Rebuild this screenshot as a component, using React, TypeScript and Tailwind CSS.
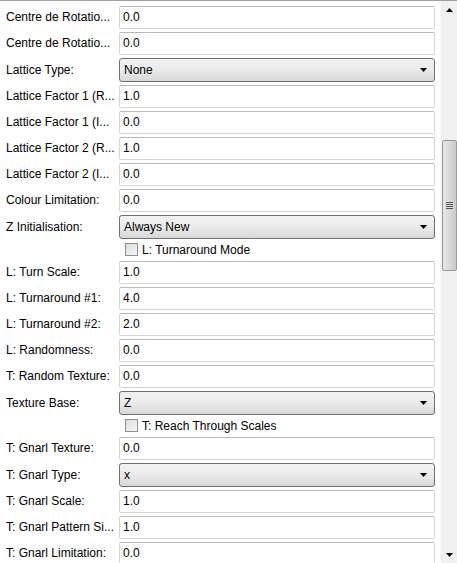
import React from "react";

type Row =
  | { kind: "text"; label: string; value: string }
  | { kind: "select"; label: string; value: string }
  | { kind: "check"; label: string };

const rows: Row[] = [
  { kind: "text", label: "Centre de Rotatio...", value: "0.0" },
  { kind: "text", label: "Centre de Rotatio...", value: "0.0" },
  { kind: "select", label: "Lattice Type:", value: "None" },
  { kind: "text", label: "Lattice Factor 1 (R...", value: "1.0" },
  { kind: "text", label: "Lattice Factor 1 (I...", value: "0.0" },
  { kind: "text", label: "Lattice Factor 2 (R...", value: "1.0" },
  { kind: "text", label: "Lattice Factor 2 (I...", value: "0.0" },
  { kind: "text", label: "Colour Limitation:", value: "0.0" },
  { kind: "select", label: "Z Initialisation:", value: "Always New" },
  { kind: "check", label: "L: Turnaround Mode" },
  { kind: "text", label: "L: Turn Scale:", value: "1.0" },
  { kind: "text", label: "L: Turnaround #1:", value: "4.0" },
  { kind: "text", label: "L: Turnaround #2:", value: "2.0" },
  { kind: "text", label: "L: Randomness:", value: "0.0" },
  { kind: "text", label: "T: Random Texture:", value: "0.0" },
  { kind: "select", label: "Texture Base:", value: "Z" },
  { kind: "check", label: "T: Reach Through Scales" },
  { kind: "text", label: "T: Gnarl Texture:", value: "0.0" },
  { kind: "select", label: "T: Gnarl Type:", value: "x" },
  { kind: "text", label: "T: Gnarl Scale:", value: "1.0" },
  { kind: "text", label: "T: Gnarl Pattern Si...", value: "1.0" },
  { kind: "text", label: "T: Gnarl Limitation:", value: "0.0" },
];

function Arrow({ up }: { up?: boolean }) {
  return (
    <svg width="7" height="4" viewBox="0 0 7 4" className={up ? "rotate-180" : ""}>
      <path d="M0 0h7L3.5 4z" fill="#000" />
    </svg>
  );
}

function FieldRow({ row }: { row: Row }) {
  if (row.kind === "check") {
    return (
      <div className="flex h-[19px] shrink-0 items-center pl-[119px]">
        <div className="h-[13px] w-[13px] border border-[#8f8f8f] bg-gradient-to-br from-[#dcdcdc] to-[#f8f8f8]" />
        <span className="ml-[4px]">{row.label}</span>
      </div>
    );
  }
  return (
    <div className={`flex shrink-0 items-center ${row.kind === "select" ? "h-[27px]" : "h-[26px]"}`}>
      <div className="w-[113px] shrink-0 truncate">{row.label}</div>
      {row.kind === "text" ? (
        <div className="flex h-[23px] flex-1 items-center rounded-[2px] border border-[#d5d5d5] border-t-[#b9b9b9] bg-white px-[3px]">
          {row.value}
        </div>
      ) : (
        <div className="flex h-[24px] flex-1 items-center justify-between rounded-[3px] border border-[#707070] bg-gradient-to-b from-[#f2f2f2] via-[#ebebeb] to-[#d8d8d8] pl-[4px] pr-[7px]">
          <span>{row.value}</span>
          <Arrow />
        </div>
      )}
    </div>
  );
}

export default function App() {
  return (
    <div
      className="flex h-[563px] w-[457px] overflow-hidden border-t border-[#a0a0a0] bg-white text-[12px] text-black"
      style={{ fontFamily: '"Liberation Sans", Arial, sans-serif' }}
    >
      <div className="flex flex-1 flex-col overflow-hidden pl-[6px] pr-[5px] pt-[3px]">
        {rows.map((row, i) => (
          <FieldRow key={i} row={row} />
        ))}
      </div>
      <div className="flex w-[17px] shrink-0 flex-col items-center border-l border-[#f8f8f8] bg-[#f0f0f0]">
        <div className="flex h-[17px] items-center justify-center">
          <Arrow up />
        </div>
        <div className="mt-[122px] flex h-[131px] w-[15px] items-center justify-center rounded-[2px] border border-[#9a9a9a] bg-gradient-to-r from-[#e6e6e6] via-[#dadada] to-[#c9c9c9]">
          <div className="flex flex-col gap-[1px]">
            <div className="h-[1px] w-[7px] bg-[#555]" />
            <div className="h-[1px] w-[7px] bg-[#555]" />
            <div className="h-[1px] w-[7px] bg-[#555]" />
            <div className="h-[1px] w-[7px] bg-[#555]" />
          </div>
        </div>
        <div className="flex-1" />
        <div className="flex h-[17px] items-center justify-center">
          <Arrow />
        </div>
      </div>
    </div>
  );
}
